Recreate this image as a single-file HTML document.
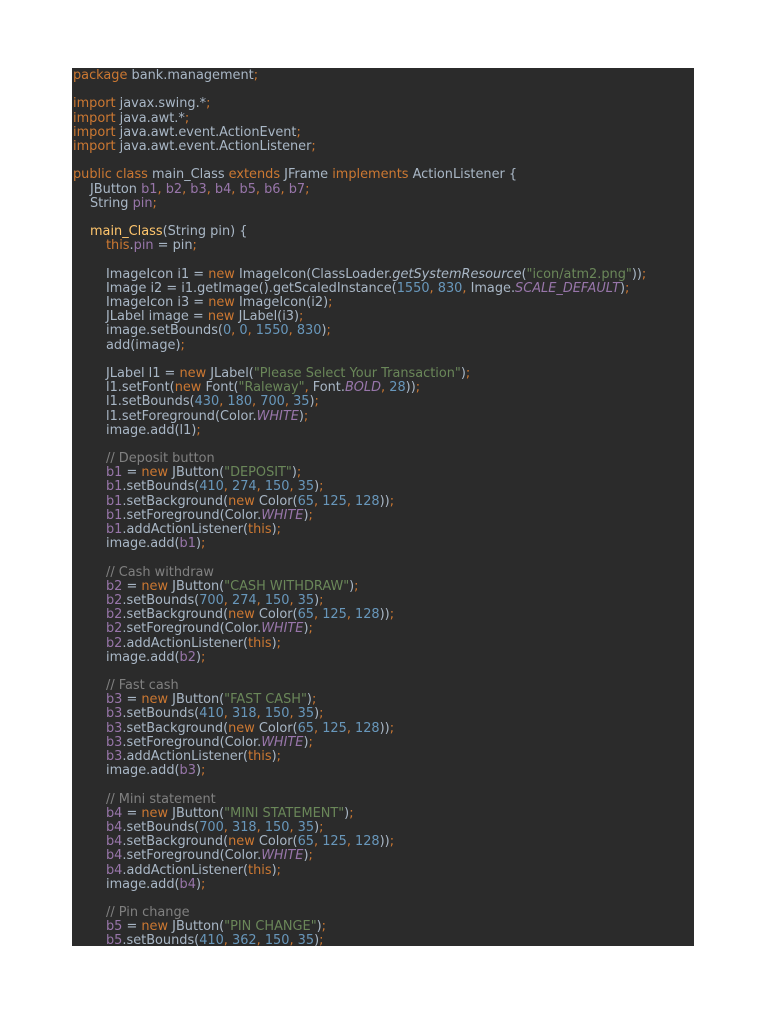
<!DOCTYPE html>
<html><head><meta charset="utf-8"><style>
html,body{margin:0;padding:0;background:#fff;width:768px;height:1024px;overflow:hidden}
#c{position:absolute;left:72px;top:68px;width:622px;height:878px;background:#2b2b2b;}
pre{margin:0;position:absolute;left:1px;top:1px;font-family:"DejaVu Sans",sans-serif;font-size:12.9px;line-height:14.18px;color:#a9b7c6;white-space:pre}
.k{color:#cc7832}.f{color:#9876aa}.n{color:#6897bb}.s{color:#6a8759}.c{color:#808080}.m{color:#ffc66d}.i{font-style:italic}
.a{display:inline-block;width:17px}.b{display:inline-block;width:33px}
</style></head><body><div id="c"><pre>
<span class="k">package</span> bank.management<span class="k">;</span>

<span class="k">import</span> javax.swing.*<span class="k">;</span>
<span class="k">import</span> java.awt.*<span class="k">;</span>
<span class="k">import</span> java.awt.event.ActionEvent<span class="k">;</span>
<span class="k">import</span> java.awt.event.ActionListener<span class="k">;</span>

<span class="k">public class</span> main_Class <span class="k">extends</span> JFrame <span class="k">implements</span> ActionListener {
<span class="a"></span>JButton <span class="f">b1</span><span class="k">,</span> <span class="f">b2</span><span class="k">,</span> <span class="f">b3</span><span class="k">,</span> <span class="f">b4</span><span class="k">,</span> <span class="f">b5</span><span class="k">,</span> <span class="f">b6</span><span class="k">,</span> <span class="f">b7</span><span class="k">;</span>
<span class="a"></span>String <span class="f">pin</span><span class="k">;</span>

<span class="a"></span><span class="m">main_Class</span>(String pin) {
<span class="b"></span><span class="k">this</span>.<span class="f">pin</span> = pin<span class="k">;</span>

<span class="b"></span>ImageIcon i1 = <span class="k">new</span> ImageIcon(ClassLoader.<span class="i">getSystemResource</span>(<span class="s">"icon/atm2.png"</span>))<span class="k">;</span>
<span class="b"></span>Image i2 = i1.getImage().getScaledInstance(<span class="n">1550</span><span class="k">,</span> <span class="n">830</span><span class="k">,</span> Image.<span class="f i">SCALE_DEFAULT</span>)<span class="k">;</span>
<span class="b"></span>ImageIcon i3 = <span class="k">new</span> ImageIcon(i2)<span class="k">;</span>
<span class="b"></span>JLabel image = <span class="k">new</span> JLabel(i3)<span class="k">;</span>
<span class="b"></span>image.setBounds(<span class="n">0</span><span class="k">,</span> <span class="n">0</span><span class="k">,</span> <span class="n">1550</span><span class="k">,</span> <span class="n">830</span>)<span class="k">;</span>
<span class="b"></span>add(image)<span class="k">;</span>

<span class="b"></span>JLabel l1 = <span class="k">new</span> JLabel(<span class="s">"Please Select Your Transaction"</span>)<span class="k">;</span>
<span class="b"></span>l1.setFont(<span class="k">new</span> Font(<span class="s">"Raleway"</span><span class="k">,</span> Font.<span class="f i">BOLD</span><span class="k">,</span> <span class="n">28</span>))<span class="k">;</span>
<span class="b"></span>l1.setBounds(<span class="n">430</span><span class="k">,</span> <span class="n">180</span><span class="k">,</span> <span class="n">700</span><span class="k">,</span> <span class="n">35</span>)<span class="k">;</span>
<span class="b"></span>l1.setForeground(Color.<span class="f i">WHITE</span>)<span class="k">;</span>
<span class="b"></span>image.add(l1)<span class="k">;</span>

<span class="b"></span><span class="c">// Deposit button</span>
<span class="b"></span><span class="f">b1</span> = <span class="k">new</span> JButton(<span class="s">"DEPOSIT"</span>)<span class="k">;</span>
<span class="b"></span><span class="f">b1</span>.setBounds(<span class="n">410</span><span class="k">,</span> <span class="n">274</span><span class="k">,</span> <span class="n">150</span><span class="k">,</span> <span class="n">35</span>)<span class="k">;</span>
<span class="b"></span><span class="f">b1</span>.setBackground(<span class="k">new</span> Color(<span class="n">65</span><span class="k">,</span> <span class="n">125</span><span class="k">,</span> <span class="n">128</span>))<span class="k">;</span>
<span class="b"></span><span class="f">b1</span>.setForeground(Color.<span class="f i">WHITE</span>)<span class="k">;</span>
<span class="b"></span><span class="f">b1</span>.addActionListener(<span class="k">this</span>)<span class="k">;</span>
<span class="b"></span>image.add(<span class="f">b1</span>)<span class="k">;</span>

<span class="b"></span><span class="c">// Cash withdraw</span>
<span class="b"></span><span class="f">b2</span> = <span class="k">new</span> JButton(<span class="s">"CASH WITHDRAW"</span>)<span class="k">;</span>
<span class="b"></span><span class="f">b2</span>.setBounds(<span class="n">700</span><span class="k">,</span> <span class="n">274</span><span class="k">,</span> <span class="n">150</span><span class="k">,</span> <span class="n">35</span>)<span class="k">;</span>
<span class="b"></span><span class="f">b2</span>.setBackground(<span class="k">new</span> Color(<span class="n">65</span><span class="k">,</span> <span class="n">125</span><span class="k">,</span> <span class="n">128</span>))<span class="k">;</span>
<span class="b"></span><span class="f">b2</span>.setForeground(Color.<span class="f i">WHITE</span>)<span class="k">;</span>
<span class="b"></span><span class="f">b2</span>.addActionListener(<span class="k">this</span>)<span class="k">;</span>
<span class="b"></span>image.add(<span class="f">b2</span>)<span class="k">;</span>

<span class="b"></span><span class="c">// Fast cash</span>
<span class="b"></span><span class="f">b3</span> = <span class="k">new</span> JButton(<span class="s">"FAST CASH"</span>)<span class="k">;</span>
<span class="b"></span><span class="f">b3</span>.setBounds(<span class="n">410</span><span class="k">,</span> <span class="n">318</span><span class="k">,</span> <span class="n">150</span><span class="k">,</span> <span class="n">35</span>)<span class="k">;</span>
<span class="b"></span><span class="f">b3</span>.setBackground(<span class="k">new</span> Color(<span class="n">65</span><span class="k">,</span> <span class="n">125</span><span class="k">,</span> <span class="n">128</span>))<span class="k">;</span>
<span class="b"></span><span class="f">b3</span>.setForeground(Color.<span class="f i">WHITE</span>)<span class="k">;</span>
<span class="b"></span><span class="f">b3</span>.addActionListener(<span class="k">this</span>)<span class="k">;</span>
<span class="b"></span>image.add(<span class="f">b3</span>)<span class="k">;</span>

<span class="b"></span><span class="c">// Mini statement</span>
<span class="b"></span><span class="f">b4</span> = <span class="k">new</span> JButton(<span class="s">"MINI STATEMENT"</span>)<span class="k">;</span>
<span class="b"></span><span class="f">b4</span>.setBounds(<span class="n">700</span><span class="k">,</span> <span class="n">318</span><span class="k">,</span> <span class="n">150</span><span class="k">,</span> <span class="n">35</span>)<span class="k">;</span>
<span class="b"></span><span class="f">b4</span>.setBackground(<span class="k">new</span> Color(<span class="n">65</span><span class="k">,</span> <span class="n">125</span><span class="k">,</span> <span class="n">128</span>))<span class="k">;</span>
<span class="b"></span><span class="f">b4</span>.setForeground(Color.<span class="f i">WHITE</span>)<span class="k">;</span>
<span class="b"></span><span class="f">b4</span>.addActionListener(<span class="k">this</span>)<span class="k">;</span>
<span class="b"></span>image.add(<span class="f">b4</span>)<span class="k">;</span>

<span class="b"></span><span class="c">// Pin change</span>
<span class="b"></span><span class="f">b5</span> = <span class="k">new</span> JButton(<span class="s">"PIN CHANGE"</span>)<span class="k">;</span>
<span class="b"></span><span class="f">b5</span>.setBounds(<span class="n">410</span><span class="k">,</span> <span class="n">362</span><span class="k">,</span> <span class="n">150</span><span class="k">,</span> <span class="n">35</span>)<span class="k">;</span>
</pre></div></body></html>
